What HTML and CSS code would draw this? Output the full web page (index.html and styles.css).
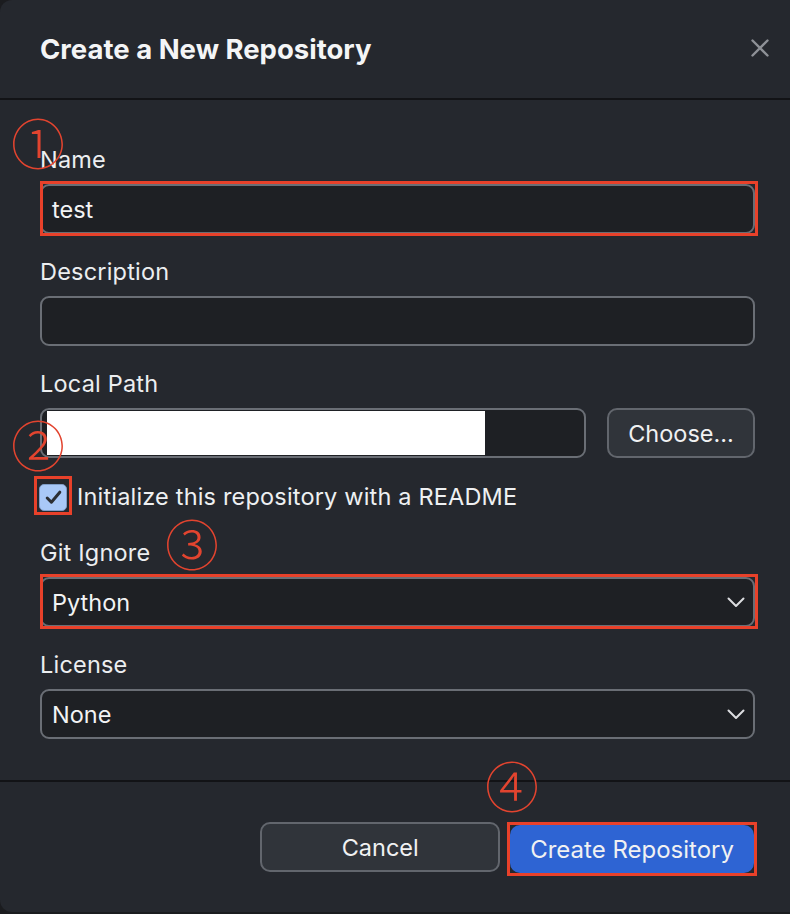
FILE: index.html
```html
<!DOCTYPE html>
<html lang="en">
<head>
<meta charset="utf-8">
<title>Create a New Repository</title>
<link rel="stylesheet" href="styles.css">
</head>
<body>
<div class="dialog">
  <header class="header">
    <h1 class="title">Create a New Repository</h1>
    <button class="close" aria-label="Close">
      <svg width="18" height="18" viewBox="0 0 18 18"><path d="M1.5 1.5 L16.5 16.5 M16.5 1.5 L1.5 16.5" stroke="#8e9197" stroke-width="2.4" stroke-linecap="round" fill="none"/></svg>
    </button>
  </header>

  <main class="body">
    <div class="field">
      <div class="label">Name</div>
      <div class="input marked">test</div>
    </div>
    <div class="field">
      <div class="label">Description</div>
      <div class="input"></div>
    </div>
    <div class="field">
      <div class="label">Local Path</div>
      <div class="path-row">
        <div class="input path"><span class="redact"></span></div>
        <button class="btn choose">Choose...</button>
      </div>
    </div>
    <label class="check-row">
      <span class="checkbox">
        <svg width="17" height="15" viewBox="0 0 17 15"><path d="M2.2 8 L6.4 12.2 L14.8 2.2" stroke="#2c2e33" stroke-width="3" stroke-linecap="round" stroke-linejoin="round" fill="none"/></svg>
      </span>
      <span class="check-text">Initialize this repository with a README</span>
    </label>
    <div class="field field-git">
      <div class="label">Git Ignore</div>
      <div class="input select marked">Python
        <svg class="chev" width="18" height="11" viewBox="0 0 18 11"><path d="M1.5 1.5 L9 9 L16.5 1.5" stroke="#dcdde0" stroke-width="2" stroke-linecap="round" stroke-linejoin="round" fill="none"/></svg>
      </div>
    </div>
    <div class="field field-license">
      <div class="label">License</div>
      <div class="input select">None
        <svg class="chev" width="18" height="11" viewBox="0 0 18 11"><path d="M1.5 1.5 L9 9 L16.5 1.5" stroke="#dcdde0" stroke-width="2" stroke-linecap="round" stroke-linejoin="round" fill="none"/></svg>
      </div>
    </div>
  </main>

  <footer class="footer">
    <button class="btn cancel">Cancel</button>
    <button class="btn primary marked">Create Repository</button>
  </footer>

  <span class="anno a1">①</span>
  <span class="anno a2">②</span>
  <span class="anno a3">③</span>
  <span class="anno a4">④</span>
</div>
</body>
</html>
```

FILE: styles.css
```css
* { box-sizing: border-box; }

html, body {
  margin: 0;
  padding: 0;
  background: #1b1c1f;
}

body {
  font-family: Inter, "Noto Sans", "Liberation Sans", sans-serif;
  color: #eef0f2;
}

.dialog {
  position: relative;
  width: 790px;
  height: 912px;
  background: #25282e;
  border-radius: 12px 0 0 12px;
  display: flex;
  flex-direction: column;
  overflow: hidden;
}

.header {
  height: 100px;
  flex: none;
  display: flex;
  align-items: center;
  justify-content: space-between;
  padding: 2px 21px 2px 40px;
  border-bottom: 2px solid #121316;
}

.title {
  margin: 0;
  font-size: 27.5px;
  font-weight: 700;
  color: #f4f5f6;
}

.close {
  background: none;
  border: none;
  padding: 0;
  margin-top: -2px;
  width: 18px;
  height: 18px;
  display: flex;
}

.body {
  flex: 1;
  padding: 44px 35px 0 40px;
  display: flex;
  flex-direction: column;
}

.field + .field { margin-top: 22px; }

.label {
  font-size: 23.5px;
  line-height: 28px;
  padding-top: 2px;
  margin-bottom: 10px;
  color: #eceef0;
  letter-spacing: 0.2px;
}

.input {
  height: 50px;
  background: #1e2024;
  border: 2px solid #6a6e75;
  border-radius: 9px;
  padding: 0 10px;
  display: flex;
  align-items: center;
  font-size: 23.5px;
  color: #f2f3f4;
}

.marked { position: relative; }

.marked::after {
  content: "";
  position: absolute;
  top: -5px;
  right: -5px;
  bottom: -4px;
  left: -2px;
  border: 3px solid #e8412a;
  pointer-events: none;
}

.path-row {
  display: flex;
  gap: 21px;
}

.path {
  flex: 1;
  padding: 0 5px;
}

.redact {
  display: block;
  width: 438px;
  height: 44px;
  background: #ffffff;
}

.btn {
  font-family: inherit;
  font-size: 23.5px;
  color: #f0f1f2;
  background: #30343a;
  border: 2px solid #62666d;
  border-radius: 10px;
  height: 50px;
  padding: 0 20px;
  cursor: default;
}

.choose {
  width: 148px;
  padding: 0;
}

.check-row {
  display: flex;
  align-items: center;
  margin-top: 25px;
  margin-left: -1px;
  gap: 10px;
  line-height: 28px;
}

.checkbox {
  position: relative;
  width: 28px;
  height: 27px;
  border-radius: 5px;
  background: #a9c8f7;
  border: 1px solid #7f9cc6;
  display: flex;
  align-items: center;
  justify-content: center;
}

.checkbox::after {
  content: "";
  position: absolute;
  top: -9px;
  right: -6px;
  bottom: -5px;
  left: -6px;
  border: 3px solid #e8412a;
}

.check-text {
  font-size: 23.5px;
  color: #eef0f2;
  letter-spacing: 0.18px;
}

.field-git { margin-top: 26px; }
.field + .field-license { margin-top: 22px; }

.select {
  justify-content: space-between;
  padding-right: 8px;
}

.chev { flex: none; }

.footer {
  flex: none;
  height: 132px;
  border-top: 2px solid #121316;
  display: flex;
  justify-content: flex-end;
  align-items: flex-start;
  gap: 10px;
  padding: 40px 36px 0 0;
}

.cancel { width: 240px; }

.primary {
  background: #2e64d3;
  border-color: #2e64d3;
  font-size: 24px;
  padding: 0 18px;
  height: 48px;
  margin-top: 3px;
}

.primary::after {
  top: -5px;
  right: -5px;
  bottom: -5px;
  left: -5px;
}

.anno {
  position: absolute;
  font-family: "Noto Sans CJK JP", sans-serif;
  font-weight: 300;
  font-size: 54px;
  line-height: 1;
  color: #e2442f;
  transform: translate(-50%, -50%);
}

.a1 { left: 38px; top: 142px; }
.a2 { left: 38px; top: 444px; }
.a3 { left: 192px; top: 543px; }
.a4 { left: 512px; top: 785px; }
```
